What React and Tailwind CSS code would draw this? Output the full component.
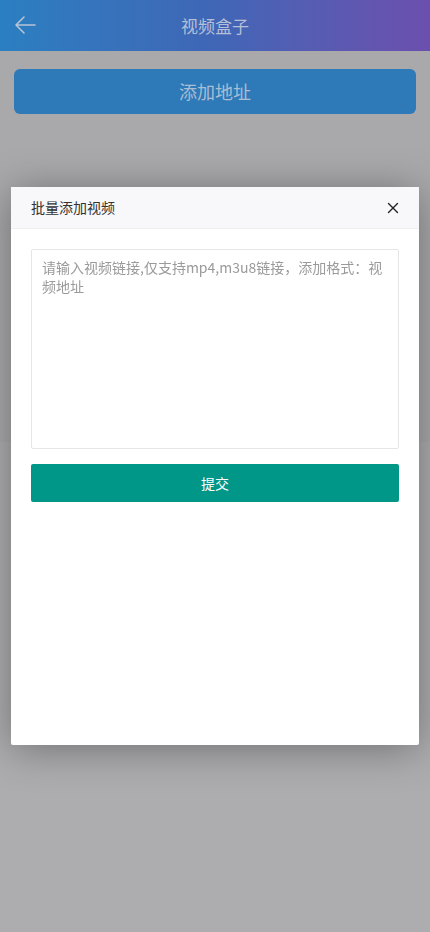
import { X } from 'lucide-react';

const font = { fontFamily: '"Noto Sans CJK SC", "Noto Sans", sans-serif' };

function Header() {
  return (
    <div className="relative flex h-[51px] items-center justify-center bg-gradient-to-r from-[#2a7fc1] via-[#3f66b6] to-[#6b4fae]">
      <svg className="absolute left-[13px] top-[14px]" width="24" height="22" viewBox="0 0 24 22" fill="none">
        <path d="M22 11H3M11 3L3 11l8 8" stroke="#b9c3d6" strokeWidth="1.6" strokeLinecap="round" strokeLinejoin="round" />
      </svg>
      <h1 className="text-[17px] text-[#b6bfd8]">视频盒子</h1>
    </div>
  );
}

function BatchModal() {
  return (
    <div className="fixed inset-0 flex items-center justify-center">
      <div className="flex h-[558px] w-[408px] flex-col rounded-[2px] bg-white shadow-[0_4px_40px_rgba(0,0,0,0.35)]">
        <div className="flex h-[42px] items-center justify-between border-b border-[#eeeeee] bg-[#f8f7fa] pl-[20px] pr-[17px]">
          <span className="text-[14px] text-[#333333]">批量添加视频</span>
          <X size={18} strokeWidth={1.8} className="text-[#222222]" />
        </div>
        <div className="flex flex-col px-[20px] pt-[20px]">
          <textarea
            className="h-[200px] w-full resize-none rounded-[2px] border border-[#e6e6e6] px-[10px] py-[8px] text-[14px] leading-[19px] text-[#333] outline-none placeholder:text-[#9a9a9a]"
            style={font}
            placeholder="请输入视频链接,仅支持mp4,m3u8链接，添加格式：视频地址"
          />
          <button className="mt-[15px] h-[38px] w-full rounded-[2px] bg-[#009688] text-[14px] text-white">
            提交
          </button>
        </div>
      </div>
    </div>
  );
}

export default function App() {
  return (
    <div className="min-h-[932px] bg-[#adacaf]" style={font}>
      <Header />
      <div className="bg-[#a9a8ab] px-[14px] pt-[18px] pb-[328px]">
        <button className="h-[45px] w-full rounded-[6px] bg-[#2e79b8] text-[18px] text-[#a9bdd4]">
          添加地址
        </button>
      </div>
      <BatchModal />
    </div>
  );
}
